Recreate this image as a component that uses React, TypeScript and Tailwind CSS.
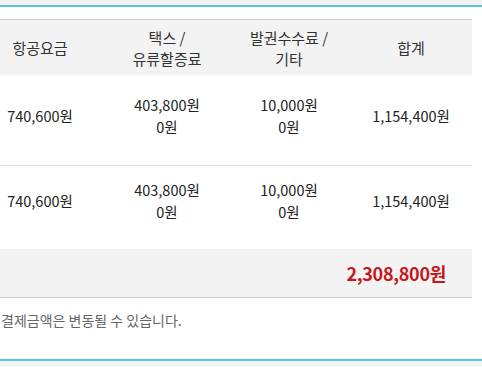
const font = { fontFamily: '"Noto Sans CJK KR", "Noto Sans", sans-serif' };

type Row = {
  fare: string;
  tax: string[];
  fee: string[];
  total: string;
  rowClass: string;
};

const rows: Row[] = [
  {
    fare: "740,600원",
    tax: ["403,800원", "0원"],
    fee: ["10,000원", "0원"],
    total: "1,154,400원",
    rowClass: "h-[91px] pt-[19px] pb-[28px] border-b border-[#e3e3e3]",
  },
  {
    fare: "740,600원",
    tax: ["403,800원", "0원"],
    fee: ["10,000원", "0원"],
    total: "1,154,400원",
    rowClass: "h-[83px] pt-[13px] pb-[26px]",
  },
];

const cols = "grid grid-cols-[106px_122px_122px_122px]";

const Cell = ({ lines, first }: { lines: string[]; first?: boolean }) => (
  <div
    className={`flex flex-col items-center justify-center text-center ${
      first ? "pr-[26px]" : ""
    }`}
  >
    {lines.map((l, i) => (
      <span key={i}>{l}</span>
    ))}
  </div>
);

export default function App() {
  return (
    <div className="w-[482px] h-[367px] bg-[#f3f3f3] overflow-hidden" style={font}>
      <div className="mt-[5px] h-[356px] border-y-2 border-[#5bc6e2] bg-white pt-[12px]">
        <div className="w-[472px]">
          {/* header */}
          <div
            className={`${cols} h-[56px] border-t border-[#cccccc] bg-[#f3f3f3] text-[15px] leading-[21px] text-[#333]`}
          >
            <Cell first lines={["항공요금"]} />
            <Cell lines={["택스 /", "유류할증료"]} />
            <Cell lines={["발권수수료 /", "기타"]} />
            <Cell lines={["합계"]} />
          </div>

          {rows.map((r, i) => (
            <div
              key={i}
              className={`${cols} box-border text-[14.5px] leading-[22px] text-[#222] ${r.rowClass}`}
            >
              <Cell first lines={[r.fare]} />
              <Cell lines={r.tax} />
              <Cell lines={r.fee} />
              <Cell lines={[r.total]} />
            </div>
          ))}

          {/* total */}
          <div className="flex h-[49px] items-center justify-end border-b border-[#cccccc] bg-[#f3f3f3] pr-[26px]">
            <span className="text-[18px] font-bold text-[#c8161d] tracking-[-0.3px]">
              2,308,800원
            </span>
          </div>
        </div>

        <p className="pt-[12px] text-[14px] leading-[20px] text-[#666] pl-[1px]">
          결제금액은 변동될 수 있습니다.
        </p>
      </div>
    </div>
  );
}
